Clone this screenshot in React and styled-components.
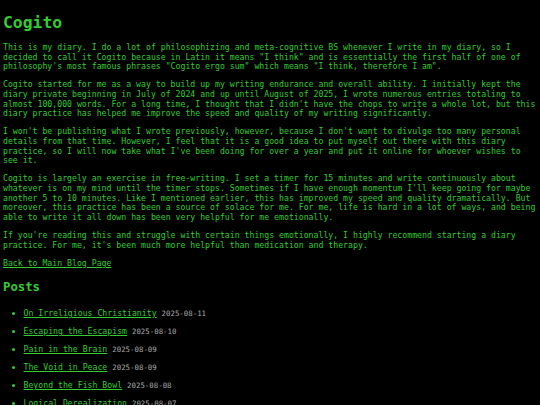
import React from 'react';
import styled, {createGlobalStyle} from 'styled-components';

const intro = [
    "This is my diary. I do a lot of philosophizing and meta-cognitive BS whenever I write in my diary, so I decided to call it Cogito because in Latin it means \"I think\" and is essentially the first half of one of philosophy's most famous phrases \"Cogito ergo sum\" which means \"I think, therefore I am\".",
    "Cogito started for me as a way to build up my writing endurance and overall ability. I initially kept the diary private beginning in July of 2024 and up until August of 2025, I wrote numerous entries totaling to almost 100,000 words. For a long time, I thought that I didn't have the chops to write a whole lot, but this diary practice has helped me improve the speed and quality of my writing significantly.",
    "I won't be publishing what I wrote previously, however, because I don't want to divulge too many personal details from that time. However, I feel that it is a good idea to put myself out there with this diary practice, so I will now take what I've been doing for over a year and put it online for whoever wishes to see it.",
    "Cogito is largely an exercise in free-writing. I set a timer for 15 minutes and write continuously about whatever is on my mind until the timer stops. Sometimes if I have enough momentum I'll keep going for maybe another 5 to 10 minutes. Like I mentioned earlier, this has improved my speed and quality dramatically. But moreover, this practice has been a source of solace for me. For me, life is hard in a lot of ways, and being able to write it all down has been very helpful for me emotionally.",
    "If you're reading this and struggle with certain things emotionally, I highly recommend starting a diary practice. For me, it's been much more helpful than medication and therapy.",
];

const posts = [
    {title: 'On Irreligious Christianity', date: '2025-08-11'},
    {title: 'Escaping the Escapism', date: '2025-08-10'},
    {title: 'Pain in the Brain', date: '2025-08-09'},
    {title: 'The Void in Peace', date: '2025-08-09'},
    {title: 'Beyond the Fish Bowl', date: '2025-08-08'},
    {title: 'Logical Derealization', date: '2025-08-07'},
];

const App = () => {
    return(
        <>
            <GlobalStyle />
            <Page>
                <Title>Cogito</Title>
                {intro.map((text, i) => <Para key={i}>{text}</Para>)}
                <Para><Link href="#">Back to Main Blog Page</Link></Para>
                <SubTitle>Posts</SubTitle>
                <PostList>
                    {posts.map((p) => (
                        <PostItem key={p.title}>
                            <Link href="#">{p.title}</Link> <PostDate>{p.date}</PostDate>
                        </PostItem>
                    ))}
                </PostList>
            </Page>
        </>
    );
}

export default App;

const GlobalStyle = createGlobalStyle`
    html, body {
        margin: 0;
        background: #000;
    }
    body {
        font-family: "DejaVu Sans Mono", monospace;
        font-size: 8.2px;
        color: #33cc33;
    }
`
const Page = styled.div`
    padding: 1px 3px 0;
`
const Title = styled.h1`
    font-size: 16.4px;
    font-weight: bold;
    margin: 12px 0 11px;
`
const Para = styled.p`
    margin: 8.2px 0;
    line-height: 9.7px;
`
const Link = styled.a`
    color: #33cc33;
    text-decoration: underline;
`
const SubTitle = styled.h2`
    font-size: 12.3px;
    font-weight: bold;
    margin: 12.2px 0 10.2px;
`
const PostList = styled.ul`
    margin: 0;
    padding-left: 20.5px;
`
const PostItem = styled.li`
    padding: 4.2px 0;
    line-height: 9.7px;
`
const PostDate = styled.span`
    color: #aaaaaa;
    font-size: 7.4px;
`
